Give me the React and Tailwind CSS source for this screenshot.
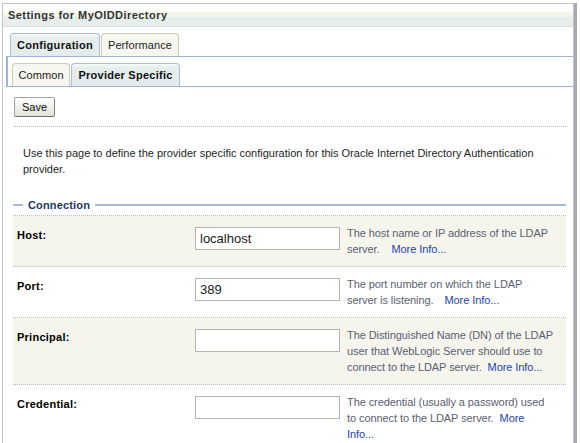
export default function App() {
  const rows = [
    {
      label: "Host:",
      value: "localhost",
      bg: "bg-[#f5f5ee]",
      lines: ["The host name or IP address of the LDAP", "server."],
      gap: "ml-[12px]",
      linkOnOwnLine: false,
    },
    {
      label: "Port:",
      value: "389",
      bg: "bg-white",
      lines: ["The port number on which the LDAP", "server is listening."],
      gap: "ml-[11px]",
      linkOnOwnLine: false,
    },
    {
      label: "Principal:",
      value: "",
      bg: "bg-[#f5f5ee]",
      lines: [
        "The Distinguished Name (DN) of the LDAP",
        "user that WebLogic Server should use to",
        "connect to the LDAP server.",
      ],
      gap: "ml-[6px]",
      linkOnOwnLine: false,
    },
    {
      label: "Credential:",
      value: "",
      bg: "bg-white",
      lines: [
        "The credential (usually a password) used",
        "to connect to the LDAP server.",
      ],
      gap: "ml-[6px]",
      linkOnOwnLine: true,
    },
  ];

  const selTab =
    "h-[23px] flex items-center justify-center border border-b-0 border-[#a9bdd7] rounded-t-[4px] bg-[linear-gradient(to_bottom,#f7fafa_0px,#e6eeed_4px,#e3ebea_100%)] font-bold tracking-[0.3px] text-[#111]";
  const tab =
    "h-[23px] flex items-center justify-center border border-b-0 border-[#c9c9c0] rounded-t-[4px] bg-[#f8f7ef] tracking-[0.1px] text-[#222]";

  return (
    <div className="w-[580px] h-[443px] overflow-hidden bg-white pt-[3px] pl-[2px] font-['Liberation_Sans',Arial,sans-serif] text-[11px] text-[#222]">
      <div className="w-[572px] h-[460px] border-l border-t border-r border-[#c4c4c6] shadow-[3px_0_0_#a9a9b1]">
        {/* Title bar */}
        <div className="h-[23px] border-b border-[#dcddd2] bg-[linear-gradient(to_bottom,#fefefd_0px,#fefefd_8px,#f6f5ea_8px,#f6f5ea_13px,#e6eeec_13px,#e6eeec_100%)] flex items-center pl-[5px] font-bold tracking-[0.45px] text-[#333]">
          Settings for MyOIDDirectory
        </div>

        {/* Tab row 1 */}
        <div className="mt-[6px] ml-[3px] flex gap-[1px] pl-[4px] border-b border-[#9fb5d7]">
          <div className={`${selTab} w-[90px]`}>Configuration</div>
          <div className={`${tab} w-[78px]`}>Performance</div>
        </div>

        {/* Tab row 2 */}
        <div className="ml-[3px] flex gap-[1px] pt-[6px] pl-[4px] border-l-2 border-b border-[#9fb5d7]">
          <div className={`${tab} w-[58px]`}>Common</div>
          <div className={`${selTab} w-[109px] tracking-[0.25px]`}>Provider Specific</div>
        </div>

        {/* Content */}
        <div className="pl-[10px] pr-[7px] pt-[10px]">
          <button className="ml-[1px] w-[41px] h-[20px] flex items-center justify-center border border-[#a2a2a2] border-b-[#707070] border-r-[#808080] rounded-[2px] bg-[linear-gradient(to_bottom,#ffffff,#e2e2da)] text-[11px] text-[#111] leading-none pt-[1px]">
            Save
          </button>

          <div className="mt-[9px] ml-[1px] border-t border-dotted border-[#b9b9b9]"></div>

          <div className="mt-[18px] pl-[10px] leading-[16px] tracking-[0px] text-[#1e1e1e]">
            Use this page to define the provider specific configuration for this Oracle Internet Directory Authentication
            <br />
            provider.
          </div>

          {/* Connection heading */}
          <div className="mt-[20px] h-[16px] flex items-center">
            <div className="w-[10px] h-[2px] bg-[#a7bbd9]"></div>
            <div className="px-[5px] font-bold tracking-[0.15px] text-[#1c3766] leading-[16px]">Connection</div>
            <div className="flex-1 h-[2px] bg-[#a7bbd9]"></div>
          </div>

          {/* Rows */}
          <div className="mt-[2px] border-t border-dotted border-[#bdbdb8]">
            {rows.map((r) => (
              <div
                key={r.label}
                className={`${r.bg} flex items-start pt-[9px] pb-[9px] border-b border-dotted border-[#bdbdb8]`}
              >
                <div className="w-[182px] pl-[4px] mt-[2px] leading-[16px] font-bold tracking-[0.25px] text-black">
                  {r.label}
                </div>
                <input
                  readOnly
                  value={r.value}
                  className="mt-[2px] w-[145px] h-[23px] border border-[#b5b5ad] bg-white pl-[4px] text-[13px] text-[#1a1a1a] outline-none"
                />
                <div className="ml-[7px] leading-[16px] text-[#5b6070] tracking-[-0.08px] whitespace-nowrap">
                  {r.lines.map((l, i) => (
                    <div key={i}>
                      {l}
                      {i === r.lines.length - 1 && (
                        <a className={`${r.gap} text-[#2343b5]`}>
                          {r.linkOnOwnLine ? "More" : "More Info..."}
                        </a>
                      )}
                    </div>
                  ))}
                  {r.linkOnOwnLine && <div className="text-[#2343b5]">Info...</div>}
                </div>
              </div>
            ))}
          </div>
        </div>
      </div>
    </div>
  );
}
